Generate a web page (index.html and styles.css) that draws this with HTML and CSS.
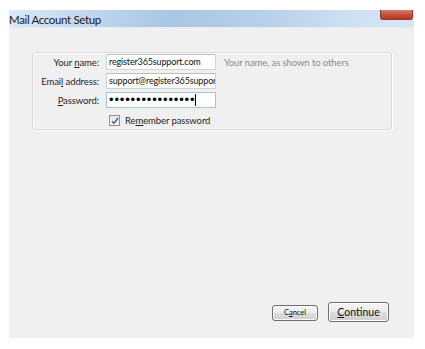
FILE: index.html
```html
<!DOCTYPE html>
<html lang="en">
  <head>
    <meta charset="UTF-8" />
    <title>Mail Account Setup</title>
    <link rel="stylesheet" href="styles.css">
  </head>
  <body>
    <div class="window">
      <div class="titlebar">
        <span class="title">Mail Account Setup</span>
        <div class="close-btn"></div>
      </div>
      <div class="content">
        <div class="fields">
          <label class="label">Your <u>n</u>ame:</label>
          <div class="input">register365support.com</div>
          <span class="hint">Your name, as shown to others</span>

          <label class="label">Emai<u>l</u> address:</label>
          <div class="input">support@register365suppor</div>
          <span></span>

          <label class="label"><u>P</u>assword:</label>
          <div class="input focused"><span class="dots">&#8226;&#8226;&#8226;&#8226;&#8226;&#8226;&#8226;&#8226;&#8226;&#8226;&#8226;&#8226;&#8226;&#8226;&#8226;&#8226;</span><span class="caret"></span></div>
          <span></span>

          <span></span>
          <div class="remember">
            <span class="checkbox">
              <svg width="8" height="8" viewBox="0 0 8 8"><path d="M1 4.2 L3 6.5 L7 1" fill="none" stroke="#3a5fa0" stroke-width="1.4"/></svg>
            </span>
            <span>Re<u>m</u>ember password</span>
          </div>
          <span></span>
        </div>

        <div class="buttons">
          <button class="btn btn-small">C<u>a</u>ncel</button>
          <button class="btn btn-main"><u>C</u>ontinue</button>
        </div>
      </div>
    </div>
  </body>
</html>
```

FILE: styles.css
```css
* {
  margin: 0;
  padding: 0;
  box-sizing: border-box;
}
body {
  background-color: #ffffff;
  font-family: Lato, "Open Sans", sans-serif;
  font-size: 10px;
  color: #1e1e1e;
}
.window {
  margin: 10px 11px 0 9px;
  height: 328px;
  display: flex;
  flex-direction: column;
  background-color: #f0f0f0;
}
.titlebar {
  height: 18px;
  display: flex;
  align-items: flex-start;
  justify-content: space-between;
  background: linear-gradient(90deg, #dbe8f5 0%, #c3d8ee 18%, #a9c6e4 40%, #b7cfe9 62%, #cfe0f2 85%, #d7e6f5 100%);
  border-bottom: 1px solid #e4ebf2;
}
.title {
  font-size: 11.5px;
  letter-spacing: -0.35px;
  line-height: 19px;
  color: #1b1b1b;
}
.close-btn {
  width: 33px;
  height: 10px;
  margin-right: 1px;
  background: linear-gradient(180deg, #d57a6a 0%, #c24a37 60%, #b13a28 100%);
  border: 1px solid #8a3a30;
  border-top: none;
  border-radius: 0 0 3px 3px;
}
.content {
  flex: 1;
  display: flex;
  flex-direction: column;
  justify-content: space-between;
  padding: 24px 22px 16px 23px;
}
.fields {
  display: grid;
  grid-template-columns: 66px 110px 1fr;
  column-gap: 7px;
  row-gap: 3px;
  align-items: center;
  align-content: start;
  height: 78px;
  padding: 1px 0 0 0;
  border: 1px solid #dadada;
  box-shadow: inset 1px 1px 0 #fbfbfb, 1px 1px 0 #fbfbfb;
  border-radius: 3px;
}
.label {
  text-align: right;
  white-space: nowrap;
  font-size: 9.5px;
  letter-spacing: -0.1px;
}
.input {
  height: 16px;
  background-color: #ffffff;
  border: 1px solid #d4d4d4;
  border-top-color: #bdbdbd;
  padding: 0 2px;
  font-size: 9px;
  letter-spacing: -0.15px;
  line-height: 14px;
  white-space: nowrap;
  overflow: hidden;
  color: #111111;
}
.input.focused {
  border-color: #a7c3e0;
  display: flex;
  align-items: center;
}
.dots {
  font-family: "Liberation Sans", sans-serif;
  font-size: 13px;
  line-height: 12px;
  letter-spacing: 0.85px;
  color: #000000;
}
.caret {
  display: inline-block;
  width: 1px;
  height: 12px;
  background-color: #000000;
}
.hint {
  color: #8b8b8b;
  font-size: 9.5px;
  letter-spacing: -0.1px;
  margin-left: 1px;
  white-space: nowrap;
}
.remember {
  display: flex;
  align-items: center;
  gap: 5px;
  padding-left: 3px;
  margin-top: 4px;
  white-space: nowrap;
  font-size: 9.5px;
  letter-spacing: -0.1px;
}
.checkbox {
  width: 11px;
  height: 11px;
  border: 1px solid #8e8f8f;
  background: linear-gradient(180deg, #e6e6e6, #fbfbfb);
  display: flex;
  align-items: center;
  justify-content: center;
}
.buttons {
  display: flex;
  justify-content: flex-end;
  align-items: center;
  gap: 10px;
  padding-right: 3px;
}
.btn {
  font-family: Lato, "Open Sans", sans-serif;
  color: #111111;
  border: 1px solid #707070;
  border-radius: 3px;
  background: linear-gradient(180deg, #f6f6f6 0%, #ebebeb 48%, #dddddd 52%, #cfcfcf 100%);
  box-shadow: inset 0 0 0 1px #fbfbfb;
  cursor: pointer;
}
.btn-small {
  width: 46px;
  height: 16px;
  font-size: 7.5px;
  margin-top: 1px;
}
.btn-main {
  width: 61px;
  height: 20px;
  font-size: 10.5px;
}
```
